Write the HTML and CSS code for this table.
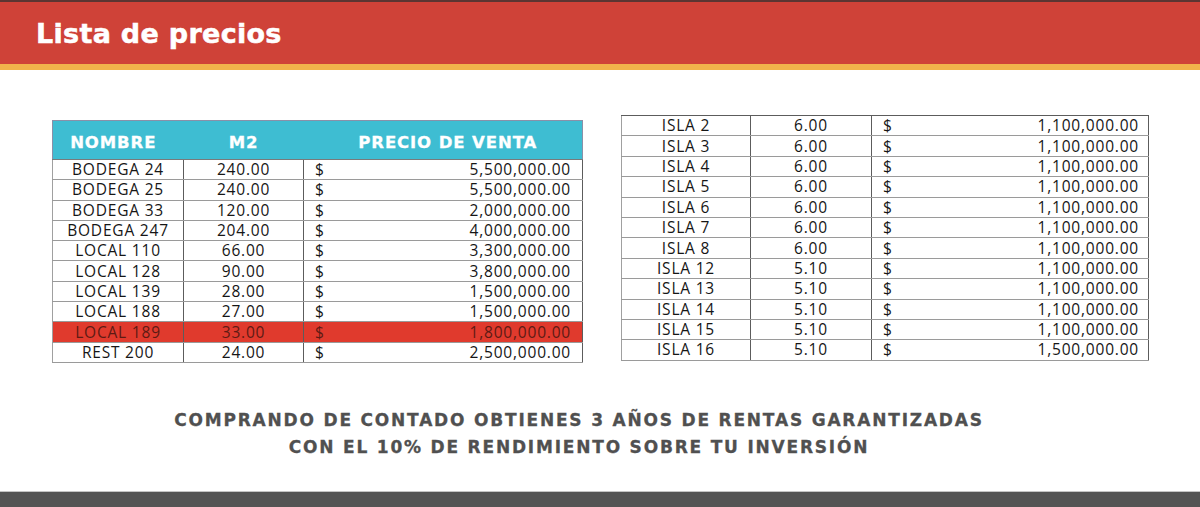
FILE: index.html
```html
<!DOCTYPE html>
<html lang="es">
<head>
<meta charset="utf-8">
<title>Lista de precios</title>
<link rel="stylesheet" href="styles.css">
</head>
<body>
<div class="page">
  <header class="banner">
    <h1 class="title">Lista de precios</h1>
  </header>
  <div class="stripe"></div>
  <main class="content">
    <div class="tables">
      <table class="ptable left">
        <colgroup><col class="c1"><col class="c2"><col class="c3"></colgroup>
        <thead>
          <tr><th>NOMBRE</th><th>M2</th><th class="hprice">PRECIO DE VENTA</th></tr>
        </thead>
        <tbody>
          <tr><td>BODEGA 24</td><td>240.00</td><td><div class="money"><span>$</span><span>5,500,000.00</span></div></td></tr>
          <tr><td>BODEGA 25</td><td>240.00</td><td><div class="money"><span>$</span><span>5,500,000.00</span></div></td></tr>
          <tr><td>BODEGA 33</td><td>120.00</td><td><div class="money"><span>$</span><span>2,000,000.00</span></div></td></tr>
          <tr><td>BODEGA 247</td><td>204.00</td><td><div class="money"><span>$</span><span>4,000,000.00</span></div></td></tr>
          <tr><td>LOCAL 110</td><td>66.00</td><td><div class="money"><span>$</span><span>3,300,000.00</span></div></td></tr>
          <tr><td>LOCAL 128</td><td>90.00</td><td><div class="money"><span>$</span><span>3,800,000.00</span></div></td></tr>
          <tr><td>LOCAL 139</td><td>28.00</td><td><div class="money"><span>$</span><span>1,500,000.00</span></div></td></tr>
          <tr><td>LOCAL 188</td><td>27.00</td><td><div class="money"><span>$</span><span>1,500,000.00</span></div></td></tr>
          <tr class="sold"><td>LOCAL 189</td><td>33.00</td><td><div class="money"><span>$</span><span>1,800,000.00</span></div></td></tr>
          <tr><td>REST 200</td><td>24.00</td><td><div class="money"><span>$</span><span>2,500,000.00</span></div></td></tr>
        </tbody>
      </table>
      <table class="ptable right">
        <colgroup><col class="r1"><col class="r2"><col class="r3"></colgroup>
        <tbody>
          <tr><td>ISLA 2</td><td>6.00</td><td><div class="money"><span>$</span><span>1,100,000.00</span></div></td></tr>
          <tr><td>ISLA 3</td><td>6.00</td><td><div class="money"><span>$</span><span>1,100,000.00</span></div></td></tr>
          <tr><td>ISLA 4</td><td>6.00</td><td><div class="money"><span>$</span><span>1,100,000.00</span></div></td></tr>
          <tr><td>ISLA 5</td><td>6.00</td><td><div class="money"><span>$</span><span>1,100,000.00</span></div></td></tr>
          <tr><td>ISLA 6</td><td>6.00</td><td><div class="money"><span>$</span><span>1,100,000.00</span></div></td></tr>
          <tr><td>ISLA 7</td><td>6.00</td><td><div class="money"><span>$</span><span>1,100,000.00</span></div></td></tr>
          <tr><td>ISLA 8</td><td>6.00</td><td><div class="money"><span>$</span><span>1,100,000.00</span></div></td></tr>
          <tr><td>ISLA 12</td><td>5.10</td><td><div class="money"><span>$</span><span>1,100,000.00</span></div></td></tr>
          <tr><td>ISLA 13</td><td>5.10</td><td><div class="money"><span>$</span><span>1,100,000.00</span></div></td></tr>
          <tr><td>ISLA 14</td><td>5.10</td><td><div class="money"><span>$</span><span>1,100,000.00</span></div></td></tr>
          <tr><td>ISLA 15</td><td>5.10</td><td><div class="money"><span>$</span><span>1,100,000.00</span></div></td></tr>
          <tr><td>ISLA 16</td><td>5.10</td><td><div class="money"><span>$</span><span>1,500,000.00</span></div></td></tr>
        </tbody>
      </table>
    </div>
    <p class="note">COMPRANDO DE CONTADO OBTIENES 3 AÑOS DE RENTAS GARANTIZADAS<br>CON EL 10% DE RENDIMIENTO SOBRE TU INVERSIÓN</p>
  </main>
  <footer class="footer"></footer>
</div>
</body>
</html>
```

FILE: styles.css
```css
* { box-sizing: border-box; }
html, body { margin: 0; padding: 0; background: #ffffff; }
.page {
  width: 1200px;
  height: 507px;
  overflow: hidden;
  display: flex;
  flex-direction: column;
  background: #ffffff;
}
.banner {
  height: 64px;
  background: #cf4238;
  border-top: 2px solid #5b3532;
  display: flex;
  align-items: flex-start;
  padding: 16px 0 0 36px;
}
.title {
  margin: 0;
  font-family: "DejaVu Sans", sans-serif;
  font-weight: bold;
  font-size: 27px;
  line-height: 32px;
  color: #ffffff;
  letter-spacing: 0.3px;
  -webkit-text-stroke: 0.5px #ffffff;
}
.stripe {
  height: 6px;
  background: #f1b24b;
}
.content {
  flex: 1;
  display: flex;
  flex-direction: column;
}
.tables {
  display: flex;
  align-items: flex-start;
  gap: 38px;
  padding: 45px 0 0 52px;
}
.ptable {
  border-collapse: collapse;
  table-layout: fixed;
  font-family: "Open Sans", sans-serif;
  font-weight: 500;
  font-size: 15.5px;
  letter-spacing: 0.8px;
  color: #161616;
}
.ptable.left { width: 530px; margin-top: 5px; }
.ptable.right { width: 527px; }
.c1 { width: 131px; }
.c2 { width: 120px; }
.c3 { width: 279px; }
.r1 { width: 129px; }
.r2 { width: 121px; }
.r3 { width: 277px; }
.ptable th {
  height: 39px;
  padding: 4px 0 0 0;
  background: #3ebdd2;
  color: #ffffff;
  font-family: "DejaVu Sans", sans-serif;
  font-weight: bold;
  font-size: 16.5px;
  letter-spacing: 0.9px;
  text-align: center;
  border-top: 1px solid #8a90a8;
  border-bottom: 1px solid #7a7a7a;
  -webkit-text-stroke: 0.3px #ffffff;
}
.ptable th:first-child { border-left: 1px solid #8a90a8; padding-right: 10px; }
.ptable th:last-child { border-right: 1px solid #8a90a8; }
.ptable th.hprice { padding-left: 10px; }
.ptable td {
  height: 20.3px;
  padding: 0;
  line-height: 19px;
  text-align: center;
  border-bottom: 1px solid #9a9a9a;
  border-left: 1px solid #5c5c5c;
  border-right: 1px solid #5c5c5c;
  white-space: nowrap;
}
.ptable td:first-child { border-left-color: #a0a0a0; }
.ptable.right td { height: 20.4px; }
.ptable.right tbody tr:first-child td { border-top: 1px solid #5c5c5c; }
.money {
  display: flex;
  justify-content: space-between;
  padding: 0 11px 0 11px;
}
.ptable.right .money { padding: 0 9px 0 11px; }
.sold td {
  background: #e03a2d;
  color: #5e1a14;
}
.note {
  margin: 44px 0 0 0;
  padding-right: 42px;
  text-align: center;
  font-family: "DejaVu Sans", sans-serif;
  font-weight: bold;
  font-size: 17px;
  line-height: 27px;
  letter-spacing: 1.8px;
  color: #505050;
  -webkit-text-stroke: 0.3px #505050;
}
.footer {
  margin-top: auto;
  height: 16px;
  background: #545454;
  border-top: 1px solid #c4c4c4;
}
```
